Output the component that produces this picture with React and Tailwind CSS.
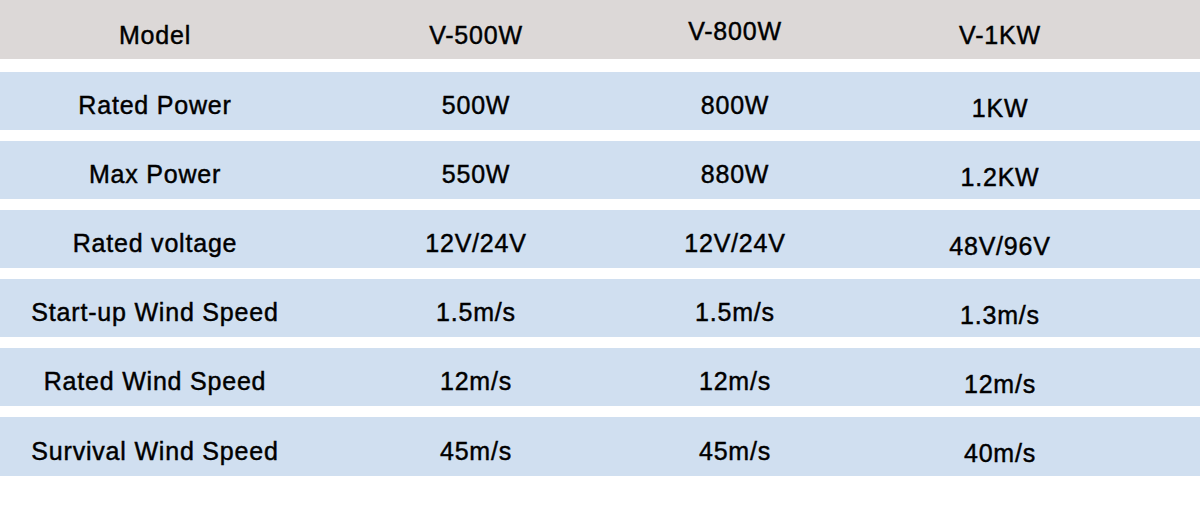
import React from 'react'

const header = ['Model', 'V-500W', 'V-800W', 'V-1KW']

const rows = [
  ['Rated Power', '500W', '800W', '1KW'],
  ['Max Power', '550W', '880W', '1.2KW'],
  ['Rated voltage', '12V/24V', '12V/24V', '48V/96V'],
  ['Start-up Wind Speed', '1.5m/s', '1.5m/s', '1.3m/s'],
  ['Rated Wind Speed', '12m/s', '12m/s', '12m/s'],
  ['Survival Wind Speed', '45m/s', '45m/s', '40m/s'],
]

const font = { fontFamily: '"Liberation Sans", Arial, sans-serif' }

const App = () => {
  return (
    <div className="w-[1200px] h-[505px] bg-white text-black [-webkit-text-stroke:0.45px_#000]" style={font}>
      {/* header row */}
      <div className="h-[59px] bg-[#dcd8d7] grid grid-cols-[310px_332px_186px_344px] text-[25px] tracking-[0.8px]">
        <div className="flex items-center justify-center pt-[12px]">{header[0]}</div>
        <div className="flex items-center justify-center pt-[12px]">{header[1]}</div>
        <div className="flex items-center justify-center pt-[5px]">{header[2]}</div>
        <div className="flex items-center justify-center pt-[12px]">{header[3]}</div>
      </div>

      <div className="mt-[13px] flex flex-col gap-[11px]">
        {rows.map((row) => (
          <div key={row[0]} className="h-[58px] last:h-[59px] bg-[#d0dff0] grid grid-cols-[310px_332px_186px_344px] text-[25px] tracking-[0.8px]">
            <div className="flex items-center justify-center pt-[10px]">{row[0]}</div>
            <div className="flex items-center justify-center pt-[10px]">{row[1]}</div>
            <div className="flex items-center justify-center pt-[10px]">{row[2]}</div>
            <div className="flex items-center justify-center pt-[15px]">{row[3]}</div>
          </div>
        ))}
      </div>
    </div>
  )
}

export default App
